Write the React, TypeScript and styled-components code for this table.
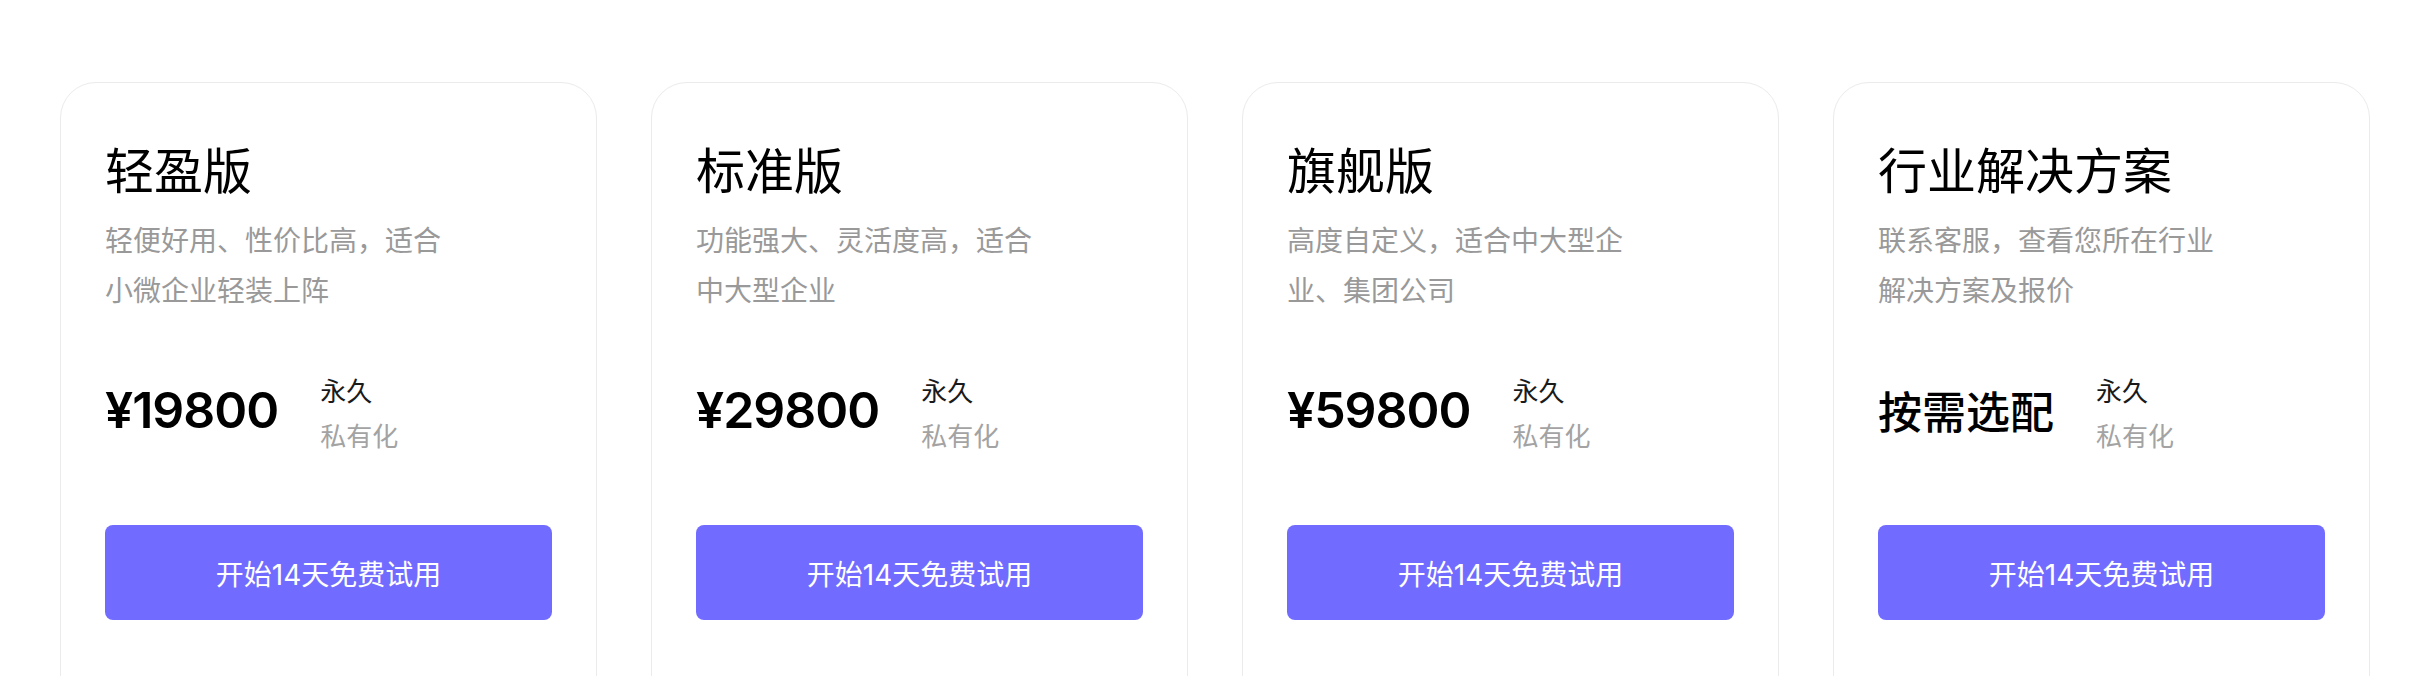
import React from "react";
import styled, { createGlobalStyle } from "styled-components";

const GlobalStyle = createGlobalStyle`
  html, body {
    margin: 0;
    padding: 0;
    background: #ffffff;
    overflow: hidden;
  }
  body {
    font-family: Inter, "Noto Sans CJK SC", sans-serif;
    color: #000;
  }
`;

const Page = styled.div`
  width: 2411px;
  height: 676px;
  box-sizing: border-box;
  padding: 82px 42px 0 60px;
  overflow: hidden;
`;

const Grid = styled.div`
  display: grid;
  grid-template-columns: repeat(4, 537px);
  column-gap: 54px;
`;

const Card = styled.div`
  box-sizing: border-box;
  height: 720px;
  border: 1px solid #ebebeb;
  border-radius: 36px;
  background: #fff;
  padding: 60px 44px 0 44px;
  display: flex;
  flex-direction: column;
`;

const Title = styled.h2`
  margin: 0;
  font-family: "Noto Sans CJK SC", sans-serif;
  font-size: 49px;
  line-height: 49px;
  font-weight: 400;
  color: #000;
`;

const Desc = styled.p`
  margin: 22px 0 0 0;
  max-width: 350px;
  font-family: "Noto Sans CJK SC", sans-serif;
  font-size: 28px;
  line-height: 50px;
  font-weight: 400;
  color: #999999;
`;

const PriceRow = styled.div`
  margin-top: 53px;
  display: flex;
  align-items: center;
`;

const Price = styled.div<{ $cjk?: boolean }>`
  font-family: ${(p) => (p.$cjk ? `"Noto Sans CJK SC", sans-serif` : `Inter, "Noto Sans CJK SC", sans-serif`)};
  font-size: ${(p) => (p.$cjk ? "44px" : "50px")};
  line-height: 52px;
  font-weight: ${(p) => (p.$cjk ? 500 : 600)};
  letter-spacing: ${(p) => (p.$cjk ? "0" : "-1px")};
  color: #000;
  margin-top: -4px;
`;

const Terms = styled.div`
  margin-left: 42px;
  display: flex;
  flex-direction: column;
  font-family: "Noto Sans CJK SC", sans-serif;
  font-size: 26px;
  line-height: 45px;
`;

const TermMain = styled.span`
  color: #1a1a1a;
`;

const TermSub = styled.span`
  color: #a3a3a3;
`;

const TrialButton = styled.button`
  margin-top: 68px;
  height: 95px;
  width: 100%;
  border: none;
  border-radius: 8px;
  background: #716cff;
  color: #ffffff;
  font-family: Inter, "Noto Sans CJK SC", sans-serif;
  font-size: 28px;
  font-weight: 400;
  cursor: pointer;
  display: flex;
  align-items: center;
  justify-content: center;
  padding: 0;
`;

type Plan = {
  title: string;
  desc: string;
  price: string;
  cjk?: boolean;
};

const plans: Plan[] = [
  { title: "轻盈版", desc: "轻便好用、性价比高，适合小微企业轻装上阵", price: "¥19800" },
  { title: "标准版", desc: "功能强大、灵活度高，适合中大型企业", price: "¥29800" },
  { title: "旗舰版", desc: "高度自定义，适合中大型企业、集团公司", price: "¥59800" },
  { title: "行业解决方案", desc: "联系客服，查看您所在行业解决方案及报价", price: "按需选配", cjk: true },
];

export default function App() {
  return (
    <>
      <GlobalStyle />
      <Page>
        <Grid>
          {plans.map((p) => (
            <Card key={p.title}>
              <Title>{p.title}</Title>
              <Desc>{p.desc}</Desc>
              <PriceRow>
                <Price $cjk={p.cjk}>{p.price}</Price>
                <Terms>
                  <TermMain>永久</TermMain>
                  <TermSub>私有化</TermSub>
                </Terms>
              </PriceRow>
              <TrialButton>开始14天免费试用</TrialButton>
            </Card>
          ))}
        </Grid>
      </Page>
    </>
  );
}
